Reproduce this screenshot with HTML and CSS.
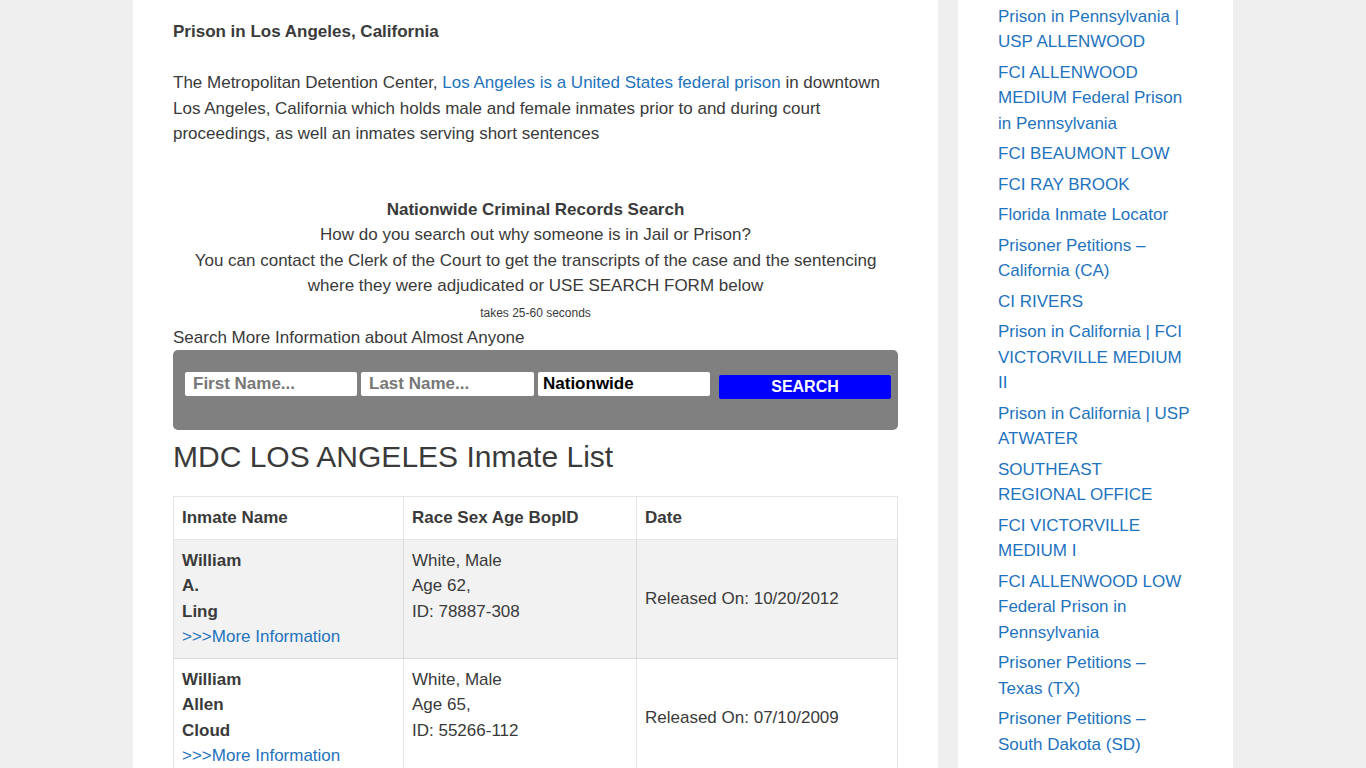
FILE: index.html
```html
<!DOCTYPE html>
<html lang="en">
    <head>
        <meta charset="UTF-8">
        <title>MDC LOS ANGELES Inmate List</title>
        <link rel="stylesheet" href="styles.css">
    </head>
    <body>

        <div class="site">

            <main class="content">
                <p><strong>Prison in Los Angeles, California</strong></p>
                <p>The Metropolitan Detention Center, <a href="#">Los Angeles is a United States federal prison</a> in downtown Los Angeles, California which holds male and female inmates prior to and during court proceedings, as well an inmates serving short sentences</p>

                <div class="search_intro">
                    <strong>Nationwide Criminal Records Search</strong><br>
                    How do you search out why someone is in Jail or Prison?<br>
                    You can contact the Clerk of the Court to get the transcripts of the case and the sentencing where they were adjudicated or USE SEARCH FORM below<br>
                    <span class="small">takes 25-60 seconds</span>
                </div>
                <div class="search_label">Search More Information about Almost Anyone</div>

                <form class="search_box" action="#">
                    <input type="text" class="field" placeholder="First Name...">
                    <input type="text" class="field field_last" placeholder="Last Name...">
                    <input type="text" class="field field_state" value="Nationwide">
                    <button type="submit" class="btn_search">SEARCH</button>
                </form>

                <h2>MDC LOS ANGELES Inmate List</h2>

                <table class="inmates">
                    <tr>
                        <th class="col_name">Inmate Name</th>
                        <th class="col_info">Race Sex Age BopID</th>
                        <th>Date</th>
                    </tr>
                    <tr class="stripe">
                        <td><strong>William<br>A.<br>Ling</strong><br><a href="#">&gt;&gt;&gt;More Information</a></td>
                        <td>White, Male<br>Age 62,<br>ID: 78887-308</td>
                        <td class="date">Released On: 10/20/2012</td>
                    </tr>
                    <tr>
                        <td><strong>William<br>Allen<br>Cloud</strong><br><a href="#">&gt;&gt;&gt;More Information</a></td>
                        <td>White, Male<br>Age 65,<br>ID: 55266-112</td>
                        <td class="date">Released On: 07/10/2009</td>
                    </tr>
                </table>
            </main>

            <aside class="sidebar">
                <ul>
                    <li><a href="#">Prison in Pennsylvania | USP ALLENWOOD</a></li>
                    <li><a href="#">FCI ALLENWOOD MEDIUM Federal Prison in Pennsylvania</a></li>
                    <li><a href="#">FCI BEAUMONT LOW</a></li>
                    <li><a href="#">FCI RAY BROOK</a></li>
                    <li><a href="#">Florida Inmate Locator</a></li>
                    <li><a href="#">Prisoner Petitions – California (CA)</a></li>
                    <li><a href="#">CI RIVERS</a></li>
                    <li><a href="#">Prison in California | FCI VICTORVILLE MEDIUM II</a></li>
                    <li><a href="#">Prison in California | USP ATWATER</a></li>
                    <li><a href="#">SOUTHEAST REGIONAL OFFICE</a></li>
                    <li><a href="#">FCI VICTORVILLE MEDIUM I</a></li>
                    <li><a href="#">FCI ALLENWOOD LOW Federal Prison in Pennsylvania</a></li>
                    <li><a href="#">Prisoner Petitions – Texas (TX)</a></li>
                    <li><a href="#">Prisoner Petitions – South Dakota (SD)</a></li>
                </ul>
            </aside>

        </div>

    </body>
</html>
```

FILE: styles.css
```css
* {
    box-sizing: border-box;
}

body {
    margin: 0;
    background-color: #efefef;
    color: #3a3a3a;
    font-family: "Liberation Sans", Arial, sans-serif;
    font-size: 17px;
    line-height: 1.5;
}

a {
    color: #1e73be;
    text-decoration: none;
}

p {
    margin: 0 0 1.5em;
}

.site {
    width: 1100px;
    margin: 0 auto;
    display: flex;
    align-items: flex-start;
}

.content {
    width: 805px;
    margin-right: 20px;
    background-color: #fff;
    padding: 19px 40px 40px;
}

.sidebar {
    width: 275px;
    background-color: #fff;
    padding: 3.5px 40px 40px;
}

.sidebar ul {
    list-style: none;
    margin: 0;
    padding: 0;
}

.sidebar li {
    padding-bottom: 5px;
}

/* search form */
.search_intro {
    text-align: center;
    margin-top: 50px;
    line-height: 1.51;
}

.search_intro .small {
    font-size: 12px;
}

.search_box {
    display: flex;
    align-items: flex-start;
    gap: 4px;
    height: 80px;
    margin: 0 0 9px;
    padding: 22px 7px 0 12px;
    background-color: #808080;
    border-radius: 5px;
}

.field {
    width: 172px;
    height: 24px;
    border: none;
    border-radius: 2px;
    padding: 0 8px;
    font-family: "Liberation Sans", Arial, sans-serif;
    font-size: 17px;
    font-weight: bold;
    color: #000;
}

.field::placeholder {
    color: #777;
}

.field_last {
    width: 173px;
}

.field_state {
    padding-left: 5px;
}

.btn_search {
    width: 172px;
    height: 24px;
    margin: 3px 0 0 5px;
    border: none;
    border-radius: 2px;
    background-color: #0000ff;
    color: #fff;
    font-family: "Liberation Sans", Arial, sans-serif;
    font-size: 16px;
    font-weight: bold;
}

h2 {
    margin: 0 0 21px;
    font-size: 30px;
    font-weight: normal;
    line-height: 1.2;
}

/* inmate table */
.inmates {
    width: 100%;
    border-collapse: separate;
    border-spacing: 0;
    border-top: 1px solid rgba(0, 0, 0, .1);
    border-left: 1px solid rgba(0, 0, 0, .1);
}

.inmates th, .inmates td {
    padding: 8px;
    border-right: 1px solid rgba(0, 0, 0, .1);
    border-bottom: 1px solid rgba(0, 0, 0, .1);
    text-align: left;
    vertical-align: top;
}

.inmates .col_name {
    width: 230px;
}

.inmates .col_info {
    width: 233px;
}

.inmates .stripe td {
    background-color: #f2f2f2;
}

.inmates td.date {
    vertical-align: middle;
}
```
